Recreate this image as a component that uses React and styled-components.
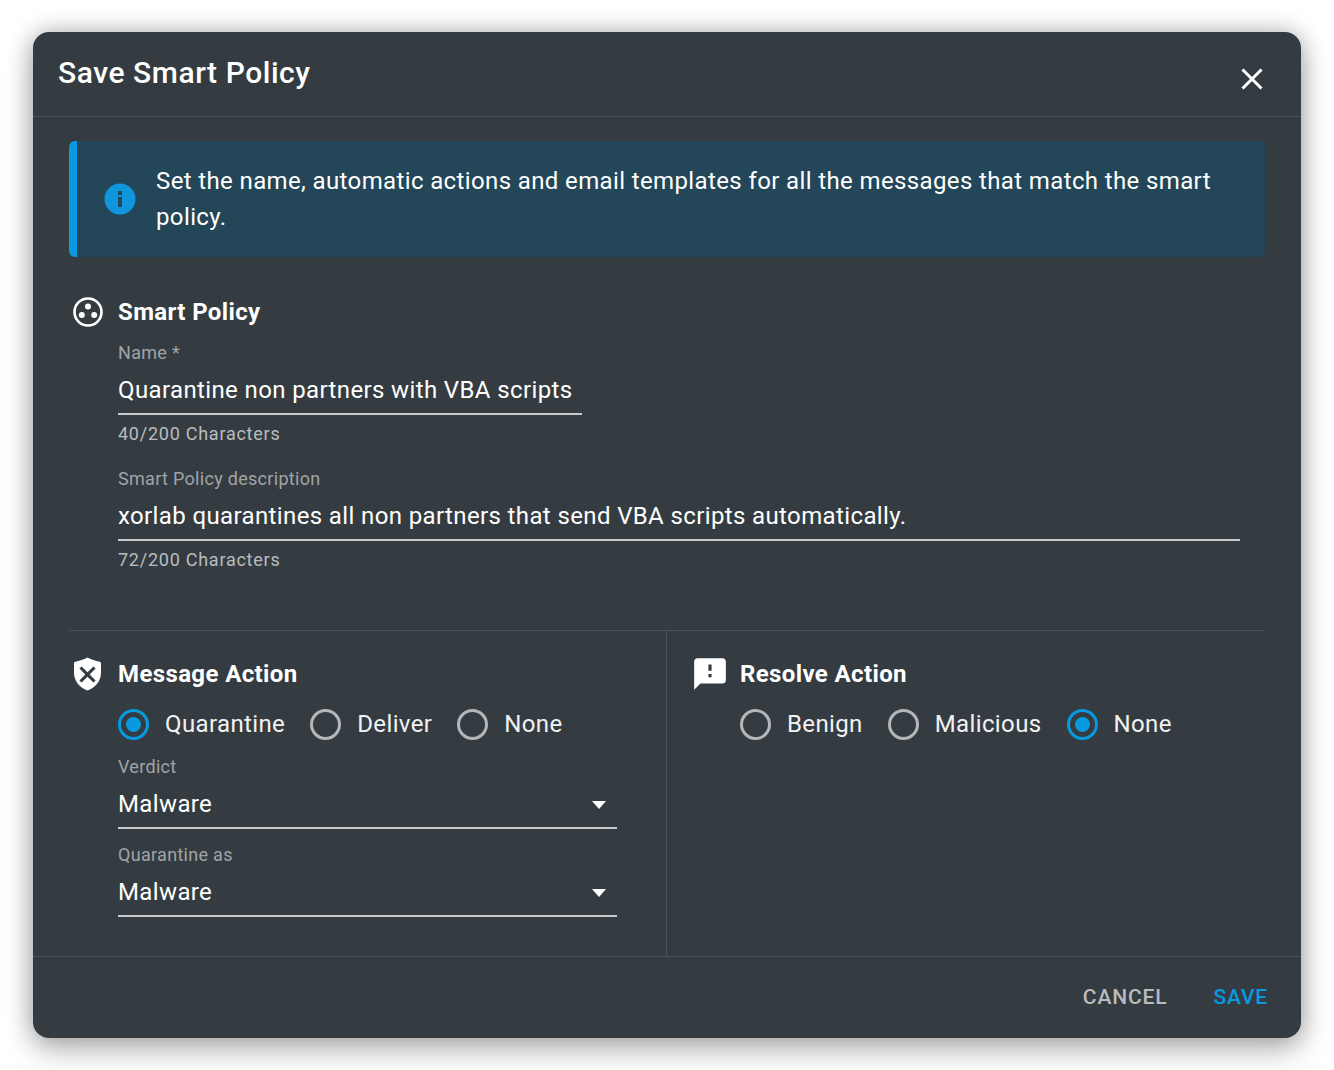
import styled, { createGlobalStyle } from "styled-components";

const GlobalStyle = createGlobalStyle`
  html, body {
    margin: 0;
    background: #fff;
  }
  * {
    box-sizing: border-box;
  }
`;

const Radio = ({ label, checked }) => (
  <RadioLabel>
    <RadioCircle $checked={checked} />
    <span>{label}</span>
  </RadioLabel>
);

const SelectField = ({ label, value }) => (
  <SelectWrap>
    <SmallLabel>{label}</SmallLabel>
    <SelectValue>
      {value}
      <Caret />
    </SelectValue>
  </SelectWrap>
);

const App = () => (
  <Page>
    <GlobalStyle />
    <Dialog>
      <Header>
        <Title>Save Smart Policy</Title>
        <Close aria-label="Close">
          <svg width="22" height="22" viewBox="0 0 22 22">
            <path d="M1.5 1.5l19 19M20.5 1.500l-19 19" stroke="#fff" strokeWidth="3" fill="none" />
          </svg>
        </Close>
      </Header>

      <Body>
        <Alert>
          <AlertIcon>
            <svg width="32" height="32" viewBox="0 0 32 32">
              <circle cx="16" cy="16" r="15.5" fill="#0f96dc" />
              <rect x="14" y="8" width="4" height="4" fill="#234659" />
              <rect x="14" y="14" width="4" height="10" fill="#234659" />
            </svg>
          </AlertIcon>
          <AlertText>
            Set the name, automatic actions and email templates for all the messages that match the smart policy.
          </AlertText>
        </Alert>

        <PolicySection>
          <PolicyHead>
            <IconSlot>
              <svg width="32" height="32" viewBox="0 0 32 32">
                <circle cx="16" cy="16" r="13.5" fill="none" stroke="#fff" strokeWidth="2.6" />
                <circle cx="16" cy="10.5" r="3" fill="#fff" />
                <circle cx="9.8" cy="19" r="3" fill="#fff" />
                <circle cx="22.2" cy="19" r="3" fill="#fff" />
              </svg>
            </IconSlot>
            <Heading>Smart Policy</Heading>
          </PolicyHead>

          <TextField $width="464px">
            <SmallLabel>Name *</SmallLabel>
            <InputValue>Quarantine non partners with VBA scripts</InputValue>
            <Helper>40/200 Characters</Helper>
          </TextField>

          <TextField $width="1122px">
            <SmallLabel>Smart Policy description</SmallLabel>
            <InputValue>xorlab quarantines all non partners that send VBA scripts automatically.</InputValue>
            <Helper>72/200 Characters</Helper>
          </TextField>
        </PolicySection>

        <Columns>
          <LeftColumn>
            <SectionHead>
              <IconSlot>
                <svg width="30" height="34" viewBox="0 0 30 34">
                  <path
                    transform="translate(.5 0)"
                    fillRule="evenodd"
                    fill="#fff"
                    d="M15 .5C11 2.600 7 4 2.800 4.700c-.8.100-1.300.7-1.300 1.500v9.600c0 8 5.600 15.200 13.500 17.700 7.900-2.500 13.500-9.700 13.500-17.700V6.200c0-.8-.5-1.400-1.300-1.500C23 4 19 2.600 15 .5zM15 15.300L20.900 9.400L23.100 11.600L17.200 17.500L23.100 23.400L20.900 25.600L15 19.700L9.100 25.600L6.900 23.400L12.800 17.500L6.900 11.600L9.100 9.400z"
                  />
                </svg>
              </IconSlot>
              <Heading>Message Action</Heading>
            </SectionHead>
            <RadioRow>
              <Radio label="Quarantine" checked />
              <Radio label="Deliver" />
              <Radio label="None" />
            </RadioRow>
            <SelectField label="Verdict" value="Malware" />
            <SelectField label="Quarantine as" value="Malware" />
          </LeftColumn>

          <RightColumn>
            <SectionHead>
              <ResolveIcon>
                <svg width="38" height="38" viewBox="0 0 24 24">
                  <path
                    fill="#fff"
                    d="M20 2H4c-1.100 0-1.990.9-1.990 2L2 22l4-4h14c1.100 0 2-.9 2-2V4c0-1.100-.9-2-2-2zm-7 12h-2v-2h2v2zm0-4h-2V6h2v4z"
                  />
                </svg>
              </ResolveIcon>
              <Heading>Resolve Action</Heading>
            </SectionHead>
            <ResolveRadios>
              <Radio label="Benign" />
              <Radio label="Malicious" />
              <Radio label="None" checked />
            </ResolveRadios>
          </RightColumn>
        </Columns>
      </Body>

      <Footer>
        <FooterButton>CANCEL</FooterButton>
        <FooterButton $primary>SAVE</FooterButton>
      </Footer>
    </Dialog>
  </Page>
);

const Page = styled.div`
  padding: 32px 33px;
  width: 1334px;
  height: 1070px;
  font-family: Roboto, "Liberation Sans", sans-serif;
  overflow: hidden;
`;

const Dialog = styled.div`
  width: 1268px;
  height: 1006px;
  background: #353c41;
  border-radius: 16px;
  color: #fff;
  display: flex;
  flex-direction: column;
  box-shadow: 0 15px 30px rgba(0, 0, 0, 0.2), 0 0 24px rgba(0, 0, 0, 0.3);
`;

const Header = styled.div`
  height: 85px;
  flex: none;
  padding: 0 38px 0 25px;
  display: flex;
  justify-content: space-between;
  border-bottom: 1px solid #4c5356;
`;

const Title = styled.h2`
  margin: 20px 0 0;
  font-size: 30px;
  line-height: 41px;
  font-weight: 500;
  letter-spacing: 0.55px;
`;

const Close = styled.button`
  margin-top: 36px;
  width: 22px;
  height: 22px;
  padding: 0;
  border: 0;
  background: none;
  line-height: 0;
`;

const Body = styled.div`
  flex: 1;
  padding: 24px 36px 0;
  display: flex;
  flex-direction: column;
`;

const Alert = styled.div`
  height: 116px;
  flex: none;
  background: #234659;
  border-left: 8px solid #079ae1;
  border-radius: 6px;
  display: flex;
  align-items: center;
  padding: 0 36px 0 27px;
`;

const AlertIcon = styled.div`
  flex: none;
  width: 52px;
  height: 32px;
  line-height: 0;
`;

const AlertText = styled.p`
  margin: 0;
  font-size: 24px;
  line-height: 36px;
  letter-spacing: 0.375px;
`;

const PolicySection = styled.div`
  height: 374px;
  flex: none;
  padding-top: 37px;
  border-bottom: 1px solid #4c5356;
`;

const SectionHead = styled.div`
  display: flex;
  align-items: center;
  height: 36px;
`;

const PolicyHead = styled(SectionHead)`
  margin-bottom: 11px;
`;

const IconSlot = styled.div`
  flex: none;
  width: 49px;
  padding-left: 3px;
  line-height: 0;
`;

const ResolveIcon = styled.div`
  flex: none;
  width: 49px;
  margin-left: -4px;
  line-height: 0;
`;

const Heading = styled.h3`
  margin: 0;
  font-size: 24px;
  line-height: 36px;
  font-weight: 700;
  letter-spacing: 0.38px;
`;

const TextField = styled.div`
  margin-left: 49px;
  width: ${(p) => p.$width};
  margin-bottom: 21px;
`;

const SmallLabel = styled.div`
  font-size: 18px;
  line-height: 24px;
  color: #a0a4a7;
  letter-spacing: 0.3px;
`;

const InputValue = styled.div`
  margin-top: 7px;
  height: 43px;
  font-size: 24px;
  line-height: 36px;
  letter-spacing: 0.375px;
  border-bottom: 2px solid #c8cacb;
  white-space: nowrap;
`;

const Helper = styled.div`
  margin-top: 7px;
  font-size: 18px;
  line-height: 24px;
  letter-spacing: 0.75px;
  color: #b9bcbe;
`;

const Columns = styled.div`
  flex: 1;
  display: flex;
  margin-right: -36px;
`;

const LeftColumn = styled.div`
  width: 598px;
  flex: none;
  padding-top: 25px;
  border-right: 1px solid #4c5356;
`;

const RightColumn = styled.div`
  flex: 1;
  padding: 25px 0 0 28px;
`;

const RadioRow = styled.div`
  margin: 16px 0 0 49px;
  display: flex;
  gap: 25px;
  height: 32px;
`;

const ResolveRadios = styled(RadioRow)`
  margin-left: 45px;
`;

const RadioLabel = styled.label`
  display: flex;
  align-items: center;
  gap: 16px;
  font-size: 24px;
  line-height: 32px;
  letter-spacing: 0.375px;
  color: #f1f2f2;
`;

const RadioCircle = styled.span`
  position: relative;
  display: block;
  width: 31px;
  height: 31px;
  border-radius: 50%;
  border: 3px solid ${(p) => (p.$checked ? "#079ae1" : "#b4b6b8")};
  &::after {
    content: "";
    display: ${(p) => (p.$checked ? "block" : "none")};
    position: absolute;
    inset: 5px;
    border-radius: 50%;
    background: #079ae1;
  }
`;

const SelectWrap = styled.div`
  margin: 15px 0 0 49px;
  width: 499px;
  & + & {
    margin-top: 14px;
  }
`;

const SelectValue = styled.div`
  position: relative;
  margin-top: 7px;
  height: 43px;
  font-size: 24px;
  line-height: 36px;
  letter-spacing: 0.375px;
  border-bottom: 2px solid #c8cacb;
`;

const Caret = styled.span`
  position: absolute;
  right: 11.5px;
  top: 15px;
  border-left: 7.5px solid transparent;
  border-right: 7.5px solid transparent;
  border-top: 8px solid #fff;
`;

const Footer = styled.div`
  height: 82px;
  flex: none;
  border-top: 1px solid #4c5356;
  display: flex;
  justify-content: flex-end;
  align-items: center;
  gap: 46px;
  padding: 0 33px 1px 0;
`;

const FooterButton = styled.button`
  padding: 0;
  border: 0;
  background: none;
  font-family: inherit;
  font-size: 21px;
  font-weight: 500;
  letter-spacing: 0.85px;
  color: ${(p) => (p.$primary ? "#079ae1" : "#b9bcbe")};
`;

export default App;
